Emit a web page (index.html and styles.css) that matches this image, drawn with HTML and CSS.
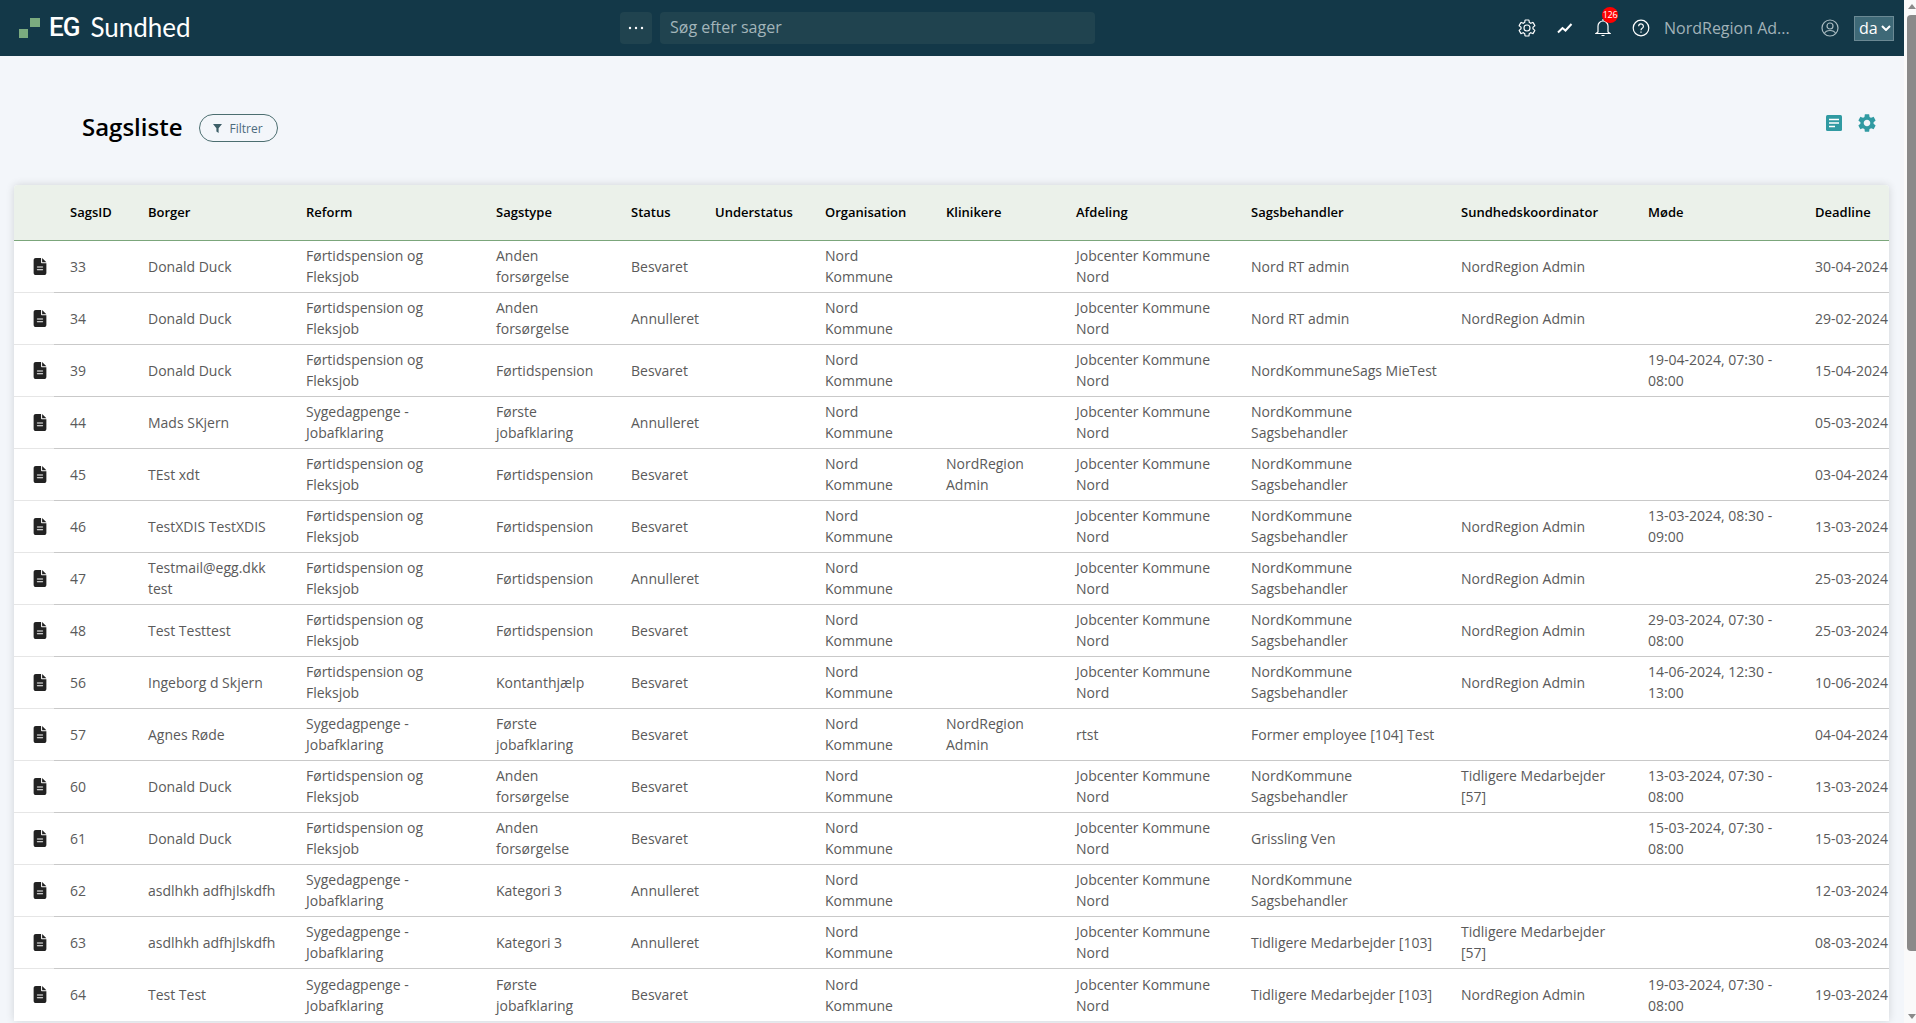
FILE: index.html
```html
<!DOCTYPE html>
<html lang="da">

<head>
    <meta charset="UTF-8">
    <title>Sagsliste</title>
    <link rel="stylesheet" href="styles.css">
</head>

<body>
    <svg class="defs" width="0" height="0">
        <symbol id="file-icon" viewBox="0 0 384 512">
            <path d="M64 0C28.7 0 0 28.7 0 64V448c0 35.3 28.7 64 64 64H320c35.3 0 64-28.7 64-64V160H256c-17.7 0-32-14.3-32-32V0H64zM256 0V128H384L256 0zM112 256H272c8.8 0 16 7.2 16 16s-7.2 16-16 16H112c-8.8 0-16-7.2-16-16s7.2-16 16-16zm0 80H272c8.8 0 16 7.2 16 16s-7.2 16-16 16H112c-8.8 0-16-7.2-16-16s7.2-16 16-16z" />
        </symbol>
        <symbol id="gear-icon" viewBox="0 0 24 24">
            <path d="M19.14 12.94c.04-.3.06-.61.06-.94 0-.32-.02-.64-.07-.94l2.03-1.58c.18-.14.23-.41.12-.61l-1.92-3.32c-.12-.22-.37-.29-.59-.22l-2.39.96c-.5-.38-1.03-.7-1.62-.94l-.36-2.54c-.04-.24-.24-.41-.48-.41h-3.84c-.24 0-.43.17-.47.41l-.36 2.54c-.59.24-1.13.57-1.62.94l-2.39-.96c-.22-.08-.47 0-.59.22L2.74 8.87c-.12.21-.08.47.12.61l2.03 1.58c-.05.3-.09.63-.09.94s.02.64.07.94l-2.03 1.58c-.18.14-.23.41-.12.61l1.92 3.32c.12.22.37.29.59.22l2.39-.96c.5.38 1.03.7 1.62.94l.36 2.54c.05.24.24.41.48.41h3.84c.24 0 .44-.17.47-.41l.36-2.54c.59-.24 1.13-.56 1.62-.94l2.39.96c.22.08.47 0 .59-.22l1.92-3.32c.12-.22.07-.47-.12-.61l-2.01-1.58zM12 15.6c-1.98 0-3.6-1.62-3.6-3.6s1.62-3.6 3.6-3.6 3.6 1.62 3.6 3.6-1.62 3.6-3.6 3.6z" />
        </symbol>
    </svg>

    <div class="page">
        <header class="topbar">
            <div class="logo">
                <svg class="logo-mark" width="21" height="20" viewBox="0 0 21 20">
                    <rect x="0" y="11" width="9" height="9" />
                    <rect x="11" y="0" width="10" height="9" />
                </svg>
                <span class="logo-eg">EG</span>
                <span class="logo-name">Sundhed</span>
            </div>
            <div class="search">
                <button class="search-more">
                    <svg width="16" height="4" viewBox="0 0 16 4">
                        <circle cx="2" cy="2" r="1.2" />
                        <circle cx="8" cy="2" r="1.2" />
                        <circle cx="14" cy="2" r="1.2" />
                    </svg>
                </button>
                <div class="search-input">Søg efter sager</div>
            </div>
            <div class="topbar-right">
                <svg class="gear-line" width="20" height="20"><use href="#gear-icon" /></svg>
                <svg class="line-icon trend" width="16" height="12" viewBox="0 0 16 12">
                    <path d="M1 10.5L5.500 6L8.500 8.500L14.500 2" />
                </svg>
                <div class="bell">
                    <svg class="line-icon" width="16" height="20" viewBox="0 0 16 20">
                        <path d="M3 14V8a5 5 0 0 1 10 0v6l2 1.500H1zM8 1v2M6.500 17.500h3" />
                    </svg>
                    <span class="badge">126</span>
                </div>
                <svg class="line-icon help" width="18" height="18" viewBox="0 0 18 18">
                    <circle cx="9" cy="9" r="7.800" />
                    <path d="M6.600 7.200a2.400 2.400 0 1 1 3.600 2.100c-.8.5-1.200.9-1.200 1.900M9 12.600v1.200" />
                </svg>
                <span class="user-name">NordRegion Ad...</span>
                <svg class="line-icon user" width="18" height="18" viewBox="0 0 18 18">
                    <circle cx="9" cy="9" r="8" />
                    <circle cx="9" cy="7" r="3" />
                    <path d="M3.400 14.500c1-2.400 3-3 5.600-3s4.600.6 5.600 3" />
                </svg>
                <div class="lang">da
                    <svg width="10" height="6" viewBox="0 0 10 6">
                        <path d="M1 1l4 4 4-4" />
                    </svg>
                </div>
            </div>
        </header>

        <main class="content">
            <div class="title-row">
                <h1>Sagsliste</h1>
                <button class="filter-btn">
                    <svg width="9" height="9" viewBox="0 0 9 9">
                        <path d="M0 0h9L5.600 4.200V9L3.400 7.600V4.200z" />
                    </svg>
                    Filtrer
                </button>
                <div class="title-actions">
                    <svg class="note-icon" width="16" height="16" viewBox="0 0 16 16">
                        <rect width="16" height="16" rx="1.500" />
                        <path d="M3 4.500h10M3 8h10M3 11.500h6" />
                    </svg>
                    <svg class="gear-fill" width="20" height="20"><use href="#gear-icon" /></svg>
                </div>
            </div>

            <div class="card">
                <table class="case-table">
                    <colgroup>
                        <col class="c-icon"><col class="c-id"><col class="c-borger"><col class="c-reform"><col class="c-type"><col class="c-status"><col class="c-under"><col class="c-org"><col class="c-klin"><col class="c-afd"><col class="c-sags"><col class="c-koord"><col class="c-mode"><col class="c-dead">
                    </colgroup>
                    <thead>
                        <tr><th></th><th>SagsID</th><th>Borger</th><th>Reform</th><th>Sagstype</th><th>Status</th><th>Understatus</th><th>Organisation</th><th>Klinikere</th><th>Afdeling</th><th>Sagsbehandler</th><th>Sundhedskoordinator</th><th>Møde</th><th>Deadline</th></tr>
                    </thead>
                    <tbody>
                        <tr><td><svg class="file" width="14" height="17"><use href="#file-icon" /></svg></td><td>33</td><td>Donald Duck</td><td>Førtidspension og Fleksjob</td><td>Anden forsørgelse</td><td>Besvaret</td><td></td><td class="org">Nord Kommune</td><td></td><td>Jobcenter Kommune Nord</td><td>Nord RT admin</td><td>NordRegion Admin</td><td></td><td>30-04-2024</td></tr>
                        <tr><td><svg class="file" width="14" height="17"><use href="#file-icon" /></svg></td><td>34</td><td>Donald Duck</td><td>Førtidspension og Fleksjob</td><td>Anden forsørgelse</td><td>Annulleret</td><td></td><td class="org">Nord Kommune</td><td></td><td>Jobcenter Kommune Nord</td><td>Nord RT admin</td><td>NordRegion Admin</td><td></td><td>29-02-2024</td></tr>
                        <tr><td><svg class="file" width="14" height="17"><use href="#file-icon" /></svg></td><td>39</td><td>Donald Duck</td><td>Førtidspension og Fleksjob</td><td>Førtidspension</td><td>Besvaret</td><td></td><td class="org">Nord Kommune</td><td></td><td>Jobcenter Kommune Nord</td><td>NordKommuneSags MieTest</td><td></td><td>19-04-2024, 07:30 - 08:00</td><td>15-04-2024</td></tr>
                        <tr><td><svg class="file" width="14" height="17"><use href="#file-icon" /></svg></td><td>44</td><td>Mads SKjern</td><td>Sygedagpenge - Jobafklaring</td><td>Første jobafklaring</td><td>Annulleret</td><td></td><td class="org">Nord Kommune</td><td></td><td>Jobcenter Kommune Nord</td><td>NordKommune Sagsbehandler</td><td></td><td></td><td>05-03-2024</td></tr>
                        <tr><td><svg class="file" width="14" height="17"><use href="#file-icon" /></svg></td><td>45</td><td>TEst xdt</td><td>Førtidspension og Fleksjob</td><td>Førtidspension</td><td>Besvaret</td><td></td><td class="org">Nord Kommune</td><td>NordRegion Admin</td><td>Jobcenter Kommune Nord</td><td>NordKommune Sagsbehandler</td><td></td><td></td><td>03-04-2024</td></tr>
                        <tr><td><svg class="file" width="14" height="17"><use href="#file-icon" /></svg></td><td>46</td><td>TestXDIS TestXDIS</td><td>Førtidspension og Fleksjob</td><td>Førtidspension</td><td>Besvaret</td><td></td><td class="org">Nord Kommune</td><td></td><td>Jobcenter Kommune Nord</td><td>NordKommune Sagsbehandler</td><td>NordRegion Admin</td><td>13-03-2024, 08:30 - 09:00</td><td>13-03-2024</td></tr>
                        <tr><td><svg class="file" width="14" height="17"><use href="#file-icon" /></svg></td><td>47</td><td>Testmail@egg.dkk test</td><td>Førtidspension og Fleksjob</td><td>Førtidspension</td><td>Annulleret</td><td></td><td class="org">Nord Kommune</td><td></td><td>Jobcenter Kommune Nord</td><td>NordKommune Sagsbehandler</td><td>NordRegion Admin</td><td></td><td>25-03-2024</td></tr>
                        <tr><td><svg class="file" width="14" height="17"><use href="#file-icon" /></svg></td><td>48</td><td>Test Testtest</td><td>Førtidspension og Fleksjob</td><td>Førtidspension</td><td>Besvaret</td><td></td><td class="org">Nord Kommune</td><td></td><td>Jobcenter Kommune Nord</td><td>NordKommune Sagsbehandler</td><td>NordRegion Admin</td><td>29-03-2024, 07:30 - 08:00</td><td>25-03-2024</td></tr>
                        <tr><td><svg class="file" width="14" height="17"><use href="#file-icon" /></svg></td><td>56</td><td>Ingeborg d Skjern</td><td>Førtidspension og Fleksjob</td><td>Kontanthjælp</td><td>Besvaret</td><td></td><td class="org">Nord Kommune</td><td></td><td>Jobcenter Kommune Nord</td><td>NordKommune Sagsbehandler</td><td>NordRegion Admin</td><td>14-06-2024, 12:30 - 13:00</td><td>10-06-2024</td></tr>
                        <tr><td><svg class="file" width="14" height="17"><use href="#file-icon" /></svg></td><td>57</td><td>Agnes Røde</td><td>Sygedagpenge - Jobafklaring</td><td>Første jobafklaring</td><td>Besvaret</td><td></td><td class="org">Nord Kommune</td><td>NordRegion Admin</td><td>rtst</td><td>Former employee [104] Test</td><td></td><td></td><td>04-04-2024</td></tr>
                        <tr><td><svg class="file" width="14" height="17"><use href="#file-icon" /></svg></td><td>60</td><td>Donald Duck</td><td>Førtidspension og Fleksjob</td><td>Anden forsørgelse</td><td>Besvaret</td><td></td><td class="org">Nord Kommune</td><td></td><td>Jobcenter Kommune Nord</td><td>NordKommune Sagsbehandler</td><td>Tidligere Medarbejder [57]</td><td>13-03-2024, 07:30 - 08:00</td><td>13-03-2024</td></tr>
                        <tr><td><svg class="file" width="14" height="17"><use href="#file-icon" /></svg></td><td>61</td><td>Donald Duck</td><td>Førtidspension og Fleksjob</td><td>Anden forsørgelse</td><td>Besvaret</td><td></td><td class="org">Nord Kommune</td><td></td><td>Jobcenter Kommune Nord</td><td>Grissling Ven</td><td></td><td>15-03-2024, 07:30 - 08:00</td><td>15-03-2024</td></tr>
                        <tr><td><svg class="file" width="14" height="17"><use href="#file-icon" /></svg></td><td>62</td><td>asdlhkh adfhjlskdfh</td><td>Sygedagpenge - Jobafklaring</td><td>Kategori 3</td><td>Annulleret</td><td></td><td class="org">Nord Kommune</td><td></td><td>Jobcenter Kommune Nord</td><td>NordKommune Sagsbehandler</td><td></td><td></td><td>12-03-2024</td></tr>
                        <tr><td><svg class="file" width="14" height="17"><use href="#file-icon" /></svg></td><td>63</td><td>asdlhkh adfhjlskdfh</td><td>Sygedagpenge - Jobafklaring</td><td>Kategori 3</td><td>Annulleret</td><td></td><td class="org">Nord Kommune</td><td></td><td>Jobcenter Kommune Nord</td><td>Tidligere Medarbejder [103]</td><td>Tidligere Medarbejder [57]</td><td></td><td>08-03-2024</td></tr>
                        <tr><td><svg class="file" width="14" height="17"><use href="#file-icon" /></svg></td><td>64</td><td>Test Test</td><td>Sygedagpenge - Jobafklaring</td><td>Første jobafklaring</td><td>Besvaret</td><td></td><td class="org">Nord Kommune</td><td></td><td>Jobcenter Kommune Nord</td><td>Tidligere Medarbejder [103]</td><td>NordRegion Admin</td><td>19-03-2024, 07:30 - 08:00</td><td>19-03-2024</td></tr>
                    </tbody>
                </table>
            </div>
        </main>
    </div>

    <div class="scrollbar">
        <div class="scroll-up"></div>
        <div class="scroll-thumb"></div>
        <div class="scroll-down"></div>
    </div>
</body>

</html>
```

FILE: styles.css
```css
body {
    font-family: "Open Sans", "Noto Sans", sans-serif;
    font-size: 14px;
    display: flex;
    height: 100vh;
    margin: 0;
    overflow: hidden;
    background-color: #f3f6fa;
    color: #5a5a5a;
}

.defs {
    position: absolute;
}

.page {
    flex: 1;
    min-width: 0;
    display: flex;
    flex-direction: column;
}

/* top bar */
.topbar {
    height: 56px;
    flex: none;
    display: flex;
    align-items: center;
    background-color: #133848;
    position: relative;
}

.logo {
    width: 620px;
    flex: none;
    display: flex;
    align-items: center;
    padding-left: 19px;
    padding-bottom: 3px;
    box-sizing: border-box;
    color: #fff;
}

.logo-mark {
    fill: #7bab7f;
    margin-right: 9px;
    margin-top: 3px;
}

.logo-eg {
    font-family: Roboto, sans-serif;
    font-size: 26px;
    font-weight: 500;
    letter-spacing: -1px;
    margin-right: 11px;
}

.logo-name {
    font-family: Lato, sans-serif;
    font-size: 26px;
    font-weight: 400;
}

.search {
    display: flex;
    gap: 8px;
}

.search-more {
    width: 32px;
    height: 32px;
    padding: 0;
    border: none;
    border-radius: 4px;
    background-color: #20434f;
    display: flex;
    align-items: center;
    justify-content: center;
    fill: #fff;
}

.search-input {
    width: 435px;
    height: 32px;
    line-height: 30px;
    padding-left: 10px;
    box-sizing: border-box;
    border-radius: 4px;
    background-color: #20434f;
    color: #a3b5ba;
    font-size: 16px;
}

.topbar-right {
    margin-left: auto;
    display: flex;
    align-items: center;
    padding-right: 10px;
}

.gear-line {
    fill: none;
    stroke: #fff;
    stroke-width: 1.4;
    margin-right: 20px;
}

.line-icon {
    fill: none;
    stroke: #fff;
    stroke-width: 1.2;
}

.trend {
    stroke-width: 2;
    margin-right: 22px;
}

.bell {
    position: relative;
    display: flex;
    margin-right: 21px;
}

.badge {
    position: absolute;
    top: -11px;
    left: 7px;
    width: 16px;
    height: 16px;
    border-radius: 50%;
    background-color: #f00;
    color: #fff;
    font-size: 9px;
    line-height: 16px;
    text-align: center;
    letter-spacing: -0.3px;
}

.help {
    margin-right: 14px;
}

.user-name {
    width: 157px;
    color: #a1b2b8;
    font-size: 16px;
    white-space: nowrap;
    margin-top: -1px;
}

.user {
    margin-right: 15px;
    stroke: #a9bac0;
}

.lang {
    width: 40px;
    height: 25px;
    box-sizing: border-box;
    display: flex;
    align-items: center;
    gap: 3px;
    padding-left: 4px;
    background-color: #3e6977;
    border: 1px solid #6b8994;
    color: #fff;
    font-size: 16px;
}

.lang svg {
    fill: none;
    stroke: #fff;
    stroke-width: 2;
}

/* page head */
.content {
    flex: 1;
    padding: 0 15px 0 14px;
}

.title-row {
    height: 129px;
    display: flex;
    align-items: center;
    padding: 15px 0 0 68px;
    box-sizing: border-box;
}

h1 {
    margin: 0 16px 3px 0;
    color: #000;
    font-size: 24px;
    font-weight: 600;
}

.filter-btn {
    display: flex;
    align-items: center;
    justify-content: center;
    gap: 7px;
    width: 79px;
    height: 28px;
    padding: 0;
    border: 1px solid #4c6e70;
    border-radius: 14px;
    background: transparent;
    color: #4c6b7c;
    font-family: inherit;
    font-size: 12px;
    font-weight: 500;
}

.filter-btn svg {
    fill: #3e5f68;
}

.title-actions {
    margin-left: auto;
    margin-right: 11px;
    margin-bottom: 11px;
    display: flex;
    align-items: center;
    gap: 14px;
}

.note-icon {
    fill: #309aa2;
    stroke: #fff;
    stroke-width: 1.4;
}

.note-icon rect {
    stroke: none;
}

.gear-fill {
    fill: #309aa2;
    width: 22px;
    height: 22px;
}

/* table */
.card {
    background-color: #fff;
    border-radius: 4px 4px 0 0;
    box-shadow: 0 0 8px rgba(0, 0, 0, 0.14);
}

.case-table {
    width: 100%;
    table-layout: fixed;
    border-collapse: separate;
    border-spacing: 0;
}

.c-icon { width: 40px; }
.c-id { width: 78px; }
.c-borger { width: 158px; }
.c-reform { width: 190px; }
.c-type { width: 135px; }
.c-status { width: 84px; }
.c-under { width: 110px; }
.c-org { width: 121px; }
.c-klin { width: 130px; }
.c-afd { width: 175px; }
.c-sags { width: 210px; }
.c-koord { width: 187px; }
.c-mode { width: 167px; }
.c-dead { width: 90px; }

.case-table th {
    height: 56px;
    box-sizing: border-box;
    padding: 0 0 2px 16px;
    background-color: #ebf1ea;
    border-bottom: 1px solid #7ba67b;
    color: #000;
    font-size: 13px;
    font-weight: 600;
    text-align: left;
    white-space: nowrap;
}

.case-table th:first-child {
    border-top-left-radius: 4px;
}

.case-table th:last-child {
    border-top-right-radius: 4px;
}

.case-table td {
    height: 52px;
    box-sizing: border-box;
    padding: 0 8px 1px 16px;
    border-bottom: 1px solid #c9c9c9;
    line-height: 21px;
}

.case-table td:first-child {
    padding: 0 0 1px 19px;
    border-bottom-color: #e6e6e6;
}

.case-table td:last-child {
    padding-right: 0;
    white-space: nowrap;
}

.case-table td.org {
    padding-right: 16px;
}

.case-table tbody tr:last-child td {
    border-bottom: none;
}

.file {
    fill: #222;
    display: block;
}

/* scrollbar */
.scrollbar {
    width: 12px;
    flex: none;
    display: flex;
    flex-direction: column;
    align-items: flex-end;
    background-color: #fafafa;
}

.scroll-up,
.scroll-down {
    width: 0;
    height: 0;
    margin: 4px 0 4px 0;
    border-left: 4px solid transparent;
    border-right: 4px solid transparent;
}

.scroll-up {
    border-bottom: 5px solid #8a8a8a;
}

.scroll-down {
    margin-top: auto;
    border-top: 5px solid #8a8a8a;
}

.scroll-thumb {
    width: 9px;
    height: 936px;
    margin-top: 2px;
    background-color: #8a8a8a;
    border-radius: 4px 0 0 4px;
}
```
